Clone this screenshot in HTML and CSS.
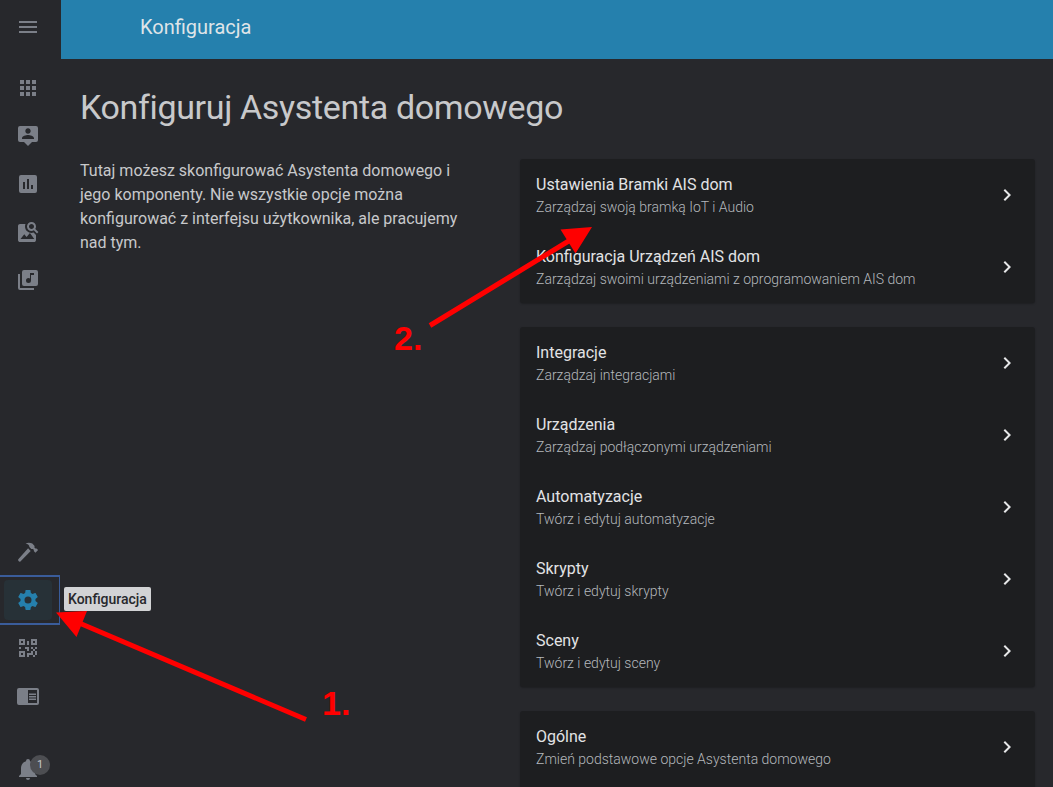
FILE: index.html
```html
<!DOCTYPE html>
<html lang="pl">
<head>
<meta charset="utf-8">
<title>Konfiguracja</title>
<link rel="stylesheet" href="styles.css">
</head>
<body>
<svg width="0" height="0" class="defs">
  <symbol id="chevron" viewBox="0 0 24 24"><path d="M8.59,16.58L13.17,12L8.59,7.41L10,6L16,12L10,18L8.59,16.58Z"/></symbol>
</svg>
<div class="app">
  <nav class="sidebar">
    <div class="menu"><svg class="icon" viewBox="0 0 24 24"><path d="M3,6H21V8H3V6M3,11H21V13H3V11M3,16H21V18H3V16Z"/></svg></div>
    <div class="group">
      <a class="item"><svg class="icon" viewBox="0 0 24 24"><path d="M16,20H20V16H16M16,14H20V10H16M10,8H14V4H10M16,8H20V4H16M10,14H14V10H10M4,14H8V10H4M4,20H8V16H4M10,20H14V16H10M4,8H8V4H4V8Z"/></svg></a>
      <a class="item"><svg class="icon" viewBox="0 0 24 24"><path d="M20,2H4A2,2 0 0,0 2,4V16A2,2 0 0,0 4,18H8L12,22L16,18H20A2,2 0 0,0 22,16V4A2,2 0 0,0 20,2M12,4.3C13.5,4.3 14.7,5.5 14.7,7C14.7,8.5 13.5,9.7 12,9.7C10.5,9.7 9.3,8.5 9.3,7C9.3,5.5 10.5,4.3 12,4.3M18,15H6V14.1C6,12.1 10,11 12,11C14,11 18,12.1 18,14.1V15Z"/></svg></a>
      <a class="item"><svg class="icon" viewBox="0 0 24 24"><path fill-rule="evenodd" d="M5,3H19A2,2 0 0,1 21,5V19A2,2 0 0,1 19,21H5A2,2 0 0,1 3,19V5A2,2 0 0,1 5,3M7,10V17H9V10H7M11,7V17H13V7H11M15,13V17H17V13H15Z"/></svg></a>
      <a class="item"><svg class="icon" viewBox="0 0 24 24"><path fill-rule="evenodd" d="M15.5,9C16.2,9 16.79,8.76 17.27,8.27C17.76,7.79 18,7.2 18,6.5C18,5.83 17.76,5.23 17.27,4.73C16.79,4.23 16.2,4 15.5,4C14.83,4 14.23,4.23 13.73,4.73C13.23,5.23 13,5.83 13,6.5C13,7.2 13.23,7.79 13.73,8.27C14.23,8.76 14.83,9 15.5,9M19.31,8.91L22.41,12L21,13.41L17.86,10.31C17.08,10.78 16.28,11 15.47,11C14.22,11 13.16,10.58 12.3,9.7C11.45,8.83 11,7.77 11,6.5C11,5.27 11.45,4.2 12.33,3.33C13.2,2.45 14.27,2 15.5,2C16.77,2 17.83,2.45 18.7,3.33C19.58,4.2 20,5.27 20,6.5C20,7.33 19.78,8.13 19.31,8.91M18.3,19H4.5L8.25,14.2L10.6,17L13.9,12.9L18.3,19M17.6,12.6L20,15V20C20,20.55 19.81,21 19.41,21.4C19,21.79 18.53,22 18,22H4C3.45,22 3,21.79 2.6,21.4C2.21,21 2,20.55 2,20V6C2,5.47 2.21,5 2.6,4.59C3,4.19 3.45,4 4,4H9.5C9.2,4.64 9.03,5.5 9.03,6.5C9.03,8.3 9.7,9.9 10.9,11.1C12.2,12.4 13.8,13 15.5,13C16.2,13 16.9,12.9 17.6,12.6Z"/></svg></a>
      <a class="item"><svg class="icon" viewBox="0 0 24 24"><path d="M18,7H15V12.5A2.5,2.5 0 0,1 12.5,15A2.5,2.5 0 0,1 10,12.5A2.5,2.5 0 0,1 12.5,10C13.07,10 13.58,10.19 14,10.5V5H18M20,2H8A2,2 0 0,0 6,4V16A2,2 0 0,0 8,18H20A2,2 0 0,0 22,16V4A2,2 0 0,0 20,2M4,6H2V20A2,2 0 0,0 4,22H18V20H4V6Z"/></svg></a>
    </div>
    <div class="group bottom">
      <a class="item"><svg class="icon" viewBox="0 0 24 24"><path d="M9.6,3.6C11.2,2.5 14.5,2.6 16.3,3.6L18.6,5.9L18.4,7.6L19.4,8.6L20.5,8.4L22.1,10L19.4,12.7L17.8,11.1L17.9,10L17,9.1L15.3,9L13.4,7C13.4,5.2 12,4.1 9.6,3.6M12.1,8.3L14.7,10.9L4.4,21.5C3.4,22.3 1.4,20.4 2.3,19.3Z"/></svg></a>
      <a class="item active"><span class="pill"><svg class="icon" viewBox="0 0 24 24"><path d="M12,15.5A3.5,3.5 0 0,1 8.5,12A3.5,3.5 0 0,1 12,8.5A3.5,3.5 0 0,1 15.5,12A3.5,3.5 0 0,1 12,15.5M19.43,12.97C19.47,12.65 19.5,12.33 19.5,12C19.5,11.67 19.47,11.34 19.43,11L21.54,9.37C21.73,9.22 21.78,8.95 21.66,8.73L19.66,5.27C19.54,5.05 19.27,4.96 19.05,5.05L16.56,6.05C16.04,5.66 15.5,5.32 14.87,5.07L14.5,2.42C14.46,2.18 14.25,2 14,2H10C9.75,2 9.54,2.18 9.5,2.42L9.13,5.07C8.5,5.32 7.96,5.66 7.44,6.05L4.95,5.05C4.73,4.96 4.46,5.05 4.34,5.27L2.34,8.73C2.21,8.95 2.27,9.22 2.46,9.37L4.57,11C4.53,11.34 4.5,11.67 4.5,12C4.5,12.33 4.53,12.65 4.57,12.97L2.46,14.63C2.27,14.78 2.21,15.05 2.34,15.27L4.34,18.73C4.46,18.95 4.73,19.03 4.95,18.95L7.44,17.94C7.96,18.34 8.5,18.68 9.13,18.93L9.5,21.58C9.54,21.82 9.75,22 10,22H14C14.25,22 14.46,21.82 14.5,21.58L14.87,18.93C15.5,18.67 16.04,18.34 16.56,17.94L19.05,18.95C19.27,19.03 19.54,18.95 19.66,18.73L21.66,15.27C21.78,15.05 21.73,14.78 21.54,14.63L19.43,12.97Z"/></svg></span><span class="tooltip">Konfiguracja</span></a>
      <a class="item"><svg class="icon" viewBox="0 0 24 24"><path d="M3,11H5V13H3V11M11,5H13V9H11V5M9,11H13V15H11V13H9V11M15,11H17V13H19V11H21V13H19V15H21V19H19V21H17V19H13V21H11V17H15V15H17V13H15V11M19,19V15H17V19H19M15,3H21V9H15V3M17,5V7H19V5H17M3,3H9V9H3V3M5,5V7H7V5H5M3,15H9V21H3V15M5,17V19H7V17H5Z"/></svg></a>
      <a class="item"><svg class="icon" viewBox="0 0 24 24"><path d="M13,12H20V13.5H13M13,9.5H20V11H13M13,14.5H20V16H13M21,4H3A2,2 0 0,0 1,6V19A2,2 0 0,0 3,21H21A2,2 0 0,0 23,19V6A2,2 0 0,0 21,4M21,19H12V6H21"/></svg></a>
    </div>
    <div class="item notifications"><svg class="icon" viewBox="0 0 24 24"><path d="M21,19V20H3V19L5,17V11C5,7.9 7.03,5.17 10,4.29C10,4.19 10,4.1 10,4A2,2 0 0,1 12,2A2,2 0 0,1 14,4C14,4.1 14,4.19 14,4.29C16.97,5.17 19,7.9 19,11V17L21,19M14,21A2,2 0 0,1 12,23A2,2 0 0,1 10,21"/></svg><span class="badge">1</span></div>
  </nav>
  <div class="page">
    <header class="toolbar">Konfiguracja</header>
    <main class="content">
      <h1 class="heading">Konfiguruj Asystenta domowego</h1>
      <div class="columns">
        <p class="intro">Tutaj możesz skonfigurować Asystenta domowego i jego komponenty. Nie wszystkie opcje można konfigurować z interfejsu użytkownika, ale pracujemy nad tym.</p>
        <div class="cards">
          <section class="card">
            <a class="row"><div><div class="name">Ustawienia Bramki AIS dom</div><div class="desc">Zarządzaj swoją bramką IoT i Audio</div></div><svg class="chevron"><use href="#chevron"/></svg></a>
            <a class="row"><div><div class="name">Konfiguracja Urządzeń AIS dom</div><div class="desc">Zarządzaj swoimi urządzeniami z oprogramowaniem AIS dom</div></div><svg class="chevron"><use href="#chevron"/></svg></a>
          </section>
          <section class="card">
            <a class="row"><div><div class="name">Integracje</div><div class="desc">Zarządzaj integracjami</div></div><svg class="chevron"><use href="#chevron"/></svg></a>
            <a class="row"><div><div class="name">Urządzenia</div><div class="desc">Zarządzaj podłączonymi urządzeniami</div></div><svg class="chevron"><use href="#chevron"/></svg></a>
            <a class="row"><div><div class="name">Automatyzacje</div><div class="desc">Twórz i edytuj automatyzacje</div></div><svg class="chevron"><use href="#chevron"/></svg></a>
            <a class="row"><div><div class="name">Skrypty</div><div class="desc">Twórz i edytuj skrypty</div></div><svg class="chevron"><use href="#chevron"/></svg></a>
            <a class="row"><div><div class="name">Sceny</div><div class="desc">Twórz i edytuj sceny</div></div><svg class="chevron"><use href="#chevron"/></svg></a>
          </section>
          <section class="card">
            <a class="row"><div><div class="name">Ogólne</div><div class="desc">Zmień podstawowe opcje Asystenta domowego</div></div><svg class="chevron"><use href="#chevron"/></svg></a>
            <div class="row"></div>
          </section>
        </div>
      </div>
    </main>
  </div>
  <svg class="annotations" viewBox="0 0 1053 787">
    <path class="shaft" d="M430 325.5L572 239M306 719.5L78 622.5"/>
    <path d="M592 227L560.5 229.5L575.5 253.5ZM56 612.5L87 611L76.5 637Z"/>
    <text x="394" y="350">2.</text>
    <text x="322" y="715">1.</text>
  </svg>
</div>
</body>
</html>
```
FILE: styles.css
```css
* { box-sizing: border-box; }
body {
  margin: 0;
  background: #27282c;
  color: #c8c9cb;
  font-family: Roboto, "Noto Sans", sans-serif;
}
.defs { position: absolute; }
.app {
  position: relative;
  display: flex;
  width: 1053px;
  height: 787px;
  overflow: hidden;
}
.sidebar {
  display: flex;
  flex-direction: column;
  flex: 0 0 61px;
  color: #7b7f88;
}
.menu { height: 64px; padding: 15px 16px; }
.icon { display: block; width: 24px; height: 24px; fill: currentColor; }
.item {
  position: relative;
  display: flex;
  align-items: center;
  width: 60px;
  height: 48px;
  padding-left: 16px;
}
.bottom { margin-top: auto; }
.active {
  height: 50px;
  margin: -1px 0;
  padding-left: 4px;
  border: 2px solid #3a5c9a;
  border-width: 2px 1px 2px 0;
  color: #2580ad;
}
.pill {
  display: flex;
  align-items: center;
  width: 48px;
  height: 40px;
  padding-left: 12px;
  border-radius: 4px;
  background: #273137;
}
.tooltip {
  position: absolute;
  left: 64px;
  top: 10px;
  height: 24px;
  padding: 0 4px;
  border-radius: 2px;
  background: #d2d3d5;
  color: #27282c;
  font-size: 14px;
  font-weight: 500;
  line-height: 24px;
}
.notifications { margin: 24px 0 -5px; }
.notifications .icon { margin-top: 1px; }
.badge {
  position: absolute;
  left: 30px;
  top: 11px;
  width: 20px;
  height: 20px;
  border-radius: 50%;
  background: #4d4e52;
  color: #c8c9cb;
  font-size: 11px;
  line-height: 19px;
  text-align: center;
}
.page { flex: 1; min-width: 0; }
.toolbar {
  height: 59px;
  padding-left: 79px;
  background: #2580ad;
  color: #dfe4e8;
  font-size: 20px;
  line-height: 54px;
}
.content { padding: 28px 18px 0 19px; }
.heading {
  margin: 0;
  font-size: 34px;
  font-weight: 400;
  letter-spacing: -.345px;
  line-height: 40px;
}
.columns {
  display: grid;
  grid-template-columns: 400px 515px;
  gap: 40px;
  padding-top: 32px;
}
.intro { margin: 0; font-size: 16px; line-height: 24px; }
.cards { display: flex; flex-direction: column; gap: 24px; }
.card {
  border-radius: 3px;
  background: #1d1e20;
  box-shadow: 0 1px 2px rgba(0, 0, 0, .25);
}
.row {
  display: flex;
  align-items: center;
  justify-content: space-between;
  height: 72px;
  padding: 0 16px;
}
.name { color: #e2e3e5; font-size: 16px; line-height: 24px; }
.desc { color: #b4b8bc; font-size: 14px; font-weight: 300; line-height: 20px; }
.chevron { width: 24px; height: 24px; fill: #e6e7e8; }
.annotations {
  position: absolute;
  inset: 0;
  width: 1053px;
  height: 787px;
  fill: #f00;
  font: bold 34px "Liberation Sans", Arial, sans-serif;
}
.shaft { stroke: #f00; stroke-width: 5; }
```
